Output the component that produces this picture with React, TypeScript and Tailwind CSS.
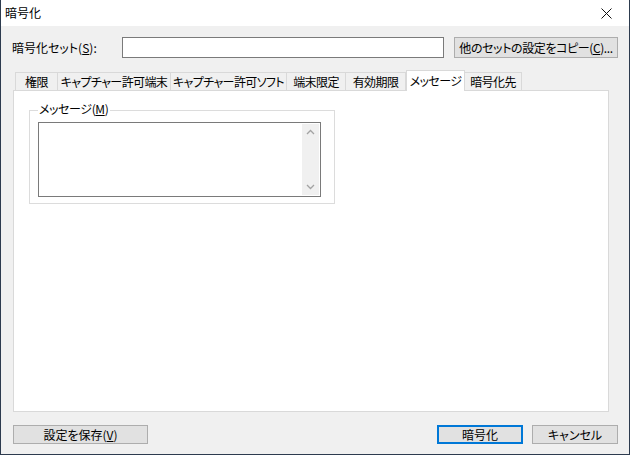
import React from "react";

const abas = [
  { nome: "権限", largura: 43 },
  { nome: "キャプチャー許可端末", largura: 113 },
  { nome: "キャプチャー許可ソフト", largura: 116 },
  { nome: "端末限定", largura: 59 },
  { nome: "有効期限", largura: 60 },
  { nome: "メッセージ", largura: 59, ativa: true },
  { nome: "暗号化先", largura: 57 },
];

export default function App() {
  return (
    <div
      className="w-[630px] h-[455px] flex flex-col bg-[#f0f0f0] border-x border-b border-[#2d3b4e] text-[12px] text-black [font-feature-settings:'palt']"
      style={{ fontFamily: '"Noto Sans CJK JP", "Noto Sans", sans-serif' }}
    >
      {/* barra de titulo */}
      <div className="h-[26px] bg-white flex items-center justify-between pl-[4px] pr-[17px]">
        <span className="text-[12px] leading-none">暗号化</span>
        <svg width="11" height="11" viewBox="0 0 11 11">
          <path d="M0.5 0.5 L10.5 10.5 M10.5 0.5 L0.5 10.5" stroke="#111" strokeWidth="1" />
        </svg>
      </div>

      <div className="flex-1 flex flex-col pl-[11px] pr-[11px] pt-[11px]">
        <div className="flex items-center h-[21px]">
          <span className="w-[110px] leading-none">
            暗号化セット(<span className="underline">S</span>):
          </span>
          <div className="w-[322px] h-[21px] bg-white border border-[#7a7a7a]" />
          <button className="ml-[10px] w-[164px] h-[21px] bg-[#e1e1e1] border border-[#adadad] leading-none tracking-[-0.4px] whitespace-nowrap">
            他のセットの設定をコピー(<span className="underline">C</span>)...
          </button>
        </div>

        {/* abas */}
        <div className="flex items-end h-[20px] mt-[12px] pl-[3px]">
          {abas.map((aba) =>
            aba.ativa ? (
              <div
                key={aba.nome}
                style={{ width: aba.largura }}
                className="shrink-0 h-[21px] -mb-px relative z-10 bg-white border-x border-t border-[#d9d9d9] flex items-center justify-center leading-none whitespace-nowrap overflow-hidden tracking-[-0.6px]"
              >
                {aba.nome}
              </div>
            ) : (
              <div
                key={aba.nome}
                style={{ width: aba.largura }}
                className="shrink-0 h-[18px] bg-[#f0f0f0] border-r border-t first:border-l border-[#d9d9d9] flex items-center justify-center leading-none whitespace-nowrap overflow-hidden tracking-[-0.6px]"
              >
                {aba.nome}
              </div>
            )
          )}
        </div>

        <div className="w-[596px] h-[322px] ml-[1px] bg-white border border-[#d9d9d9] pl-[15px] pt-[19px]">
          <div className="w-[306px] h-[94px] border border-[#dcdcdc] px-[8px] pb-[6px]">
            <div className="-mt-[8px] h-[13px] flex">
              <span className="bg-white pl-[1px] pr-[2px] leading-none tracking-[-0.4px]">
                メッセージ(<span className="underline">M</span>)
              </span>
            </div>
            <div className="mt-[6px] w-[283px] h-[75px] border border-[#7a7a7a] bg-white flex justify-end p-px">
              <div className="w-[17px] h-full bg-[#f0f0f0] flex flex-col justify-between items-center py-[5px]">
                <svg width="9" height="6" viewBox="0 0 9 6">
                  <path d="M1 5 L4.5 1.5 L8 5" stroke="#a3a3a3" strokeWidth="1.3" fill="none" />
                </svg>
                <svg width="9" height="6" viewBox="0 0 9 6">
                  <path d="M1 1 L4.5 4.5 L8 1" stroke="#a3a3a3" strokeWidth="1.3" fill="none" />
                </svg>
              </div>
            </div>
          </div>
        </div>

        <div className="flex items-center mt-[13px] ml-[1px]">
          <button className="w-[135px] h-[19px] bg-[#e1e1e1] border border-[#adadad] leading-none">
            設定を保存(<span className="underline">V</span>)
          </button>
          <button className="ml-auto w-[86px] h-[19px] bg-[#e1e1e1] border-2 border-[#0078d7] leading-none">
            暗号化
          </button>
          <button className="ml-[9px] w-[86px] h-[19px] bg-[#e1e1e1] border border-[#adadad] leading-none">
            キャンセル
          </button>
        </div>
      </div>
    </div>
  );
}
